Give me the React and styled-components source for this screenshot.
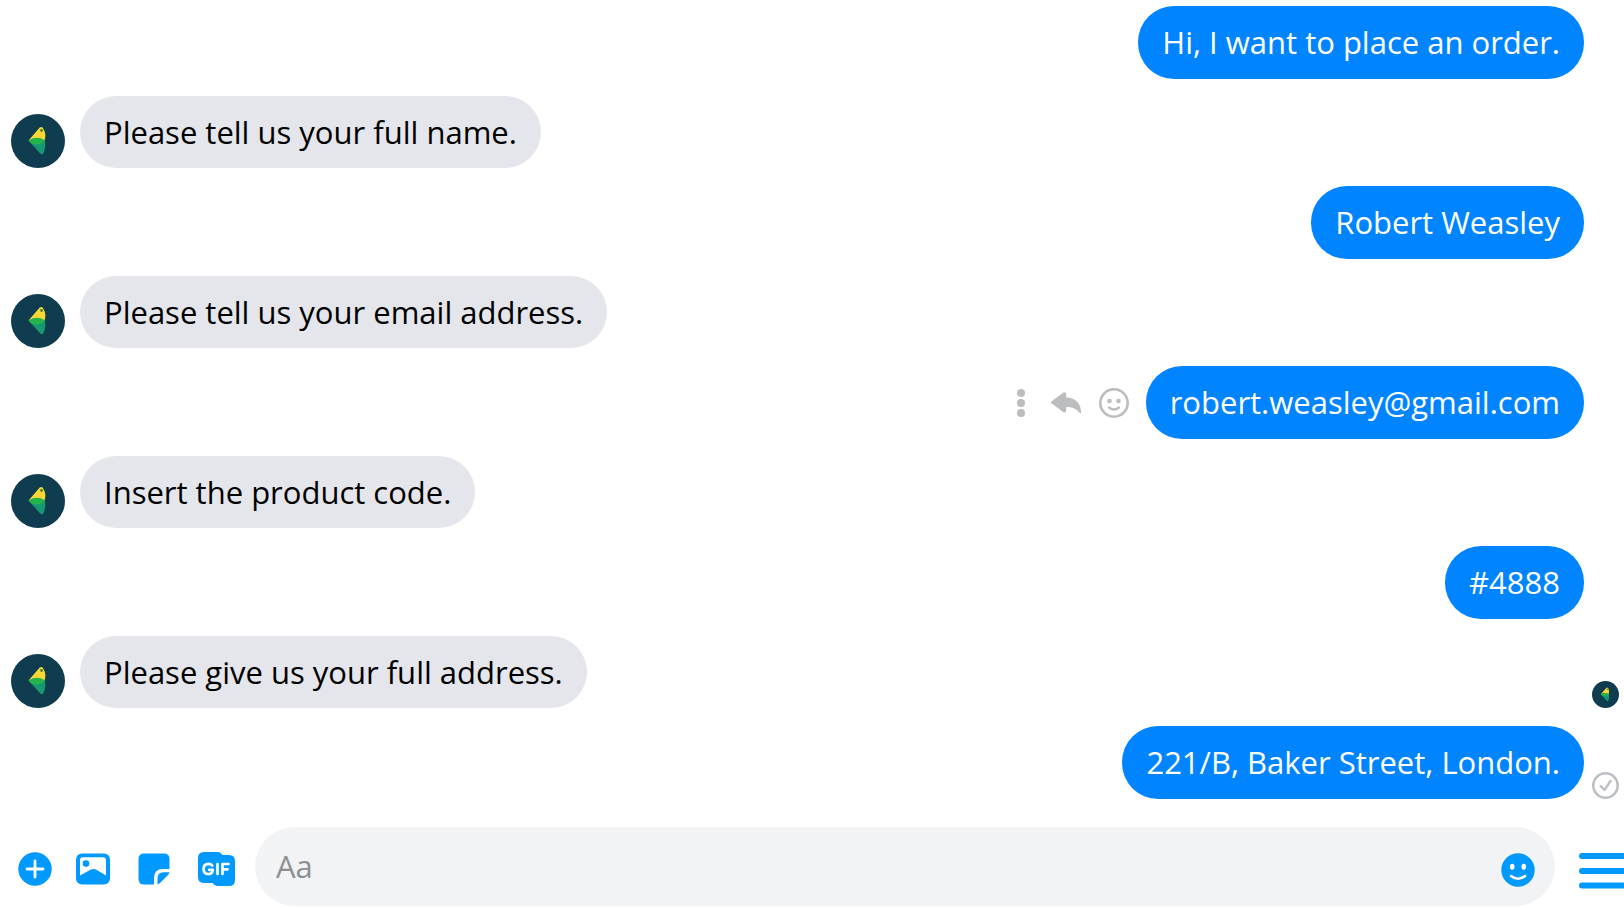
import React, { useState } from 'react'
import styled, { createGlobalStyle } from 'styled-components';

const GlobalStyle = createGlobalStyle`
    * {
        box-sizing: border-box;
    }

    body {
        margin: 0;
        background: #fff;
        font-family: "Segoe UI", "Open Sans", "Noto Sans", sans-serif;
        overflow-x: hidden;
    }

    button {
        display: flex;
        padding: 0;
        border: none;
        background: none;
        cursor: pointer;
    }
`

const ChatWrapper = styled.main`
    padding: 6px 0 2px;
`

const MessageList = styled.div`
    display: flex;
    flex-direction: column;
    gap: 17px;
`

const MessageRow = styled.div`
    display: flex;
    align-items: flex-end;
    justify-content: ${props => props.$sent ? 'flex-end' : 'flex-start'};
    padding: 0 5px ${props => props.$sent ? '0' : '1px'} 11px;
`

const Bubble = styled.p`
    margin: 0 ${props => props.$sent ? '8px' : 'auto'} 0 ${props => props.$sent ? '0' : '15px'};
    padding: 14px 24px ${props => props.$sent ? '14px' : '13px'};
    border-radius: 36px;
    font-size: 31px;
    line-height: 45px;
    color: ${props => props.$sent ? '#fff' : '#000'};
    background: ${props => props.$sent ? '#0084ff' : '#e4e6eb'};
`

const StatusSlot = styled.div`
    display: flex;
    width: 27px;
`

const MessageActions = styled.div`
    display: flex;
    align-items: center;
    align-self: center;
    gap: 18px;
    margin-right: 17px;

    button:first-child {
        margin-right: 8px;
    }
`

const Composer = styled.form`
    display: flex;
    align-items: center;
    margin-top: 28px;
    padding-left: 18px;
`

const ComposerTools = styled.div`
    display: flex;
    align-items: center;
    gap: 24px;
    margin-right: 20px;
    padding-top: 4px;

    button + button + button {
        margin-left: 4px;
    }
`

const InputWrapper = styled.div`
    display: flex;
    flex: 1;
    align-items: center;
    height: 79px;
    padding: 0 20px 0 21px;
    border-radius: 40px;
    background: #f2f3f5;

    input {
        flex: 1;
        min-width: 0;
        padding: 0;
        border: none;
        outline: none;
        background: none;
        font: inherit;
        font-size: 31px;
        line-height: 45px;
    }

    input::placeholder {
        color: #8d8f93;
        opacity: 1;
    }

    button {
        padding-top: 7px;
    }
`

const MenuButton = styled.button`
    && {
        margin-left: 24px;
        padding-top: 8px;
    }
`

const Avatar = ({ size }) => (
  <svg width={size} height={size} viewBox="0 0 54 54" role="img" aria-label="Page avatar">
    <circle cx="27" cy="27" r="27" fill="#103c50" />
    <path d="M17.5 26.5 L28.5 13.8 Q30.500 12 32.2 14.5 Q36 20.5 33.2 28 Z" fill="#fcd734" />
    <path d="M17.5 26.5 Q25 21.500 34 26.5 Q35 34 32.5 39 Q31 41.500 29 39.2 Z" fill="#169873" />
    <path d="M17.5 26.5 Q25 21.500 33.5 26 Q32.500 29.500 29 30 Q24 31 20.500 29.500 Z" fill="#25b34b" />
    <circle cx="30.500" cy="16.500" r="1.400" fill="#35853f" />
  </svg>
)

const DotsIcon = () => (
  <svg width="8" height="28" viewBox="0 0 8 28" fill="#bcbdbf">
    <circle cx="4" cy="4" r="4" />
    <circle cx="4" cy="14" r="4" />
    <circle cx="4" cy="24" r="4" />
  </svg>
)

const ReplyIcon = () => (
  <svg width="30" height="22" viewBox="0 0 30 22" fill="#bcbdbf">
    <path d="M0.700 9.300 L12.500 0.500 Q15 -0.600 15.200 2 V5.200 C24 5.600 30 11 30 20 Q30 22.300 28.200 20.500 C25.500 16.800 21 15 15.200 15 V18.500 Q15 21.300 12.500 20.200 L0.700 11.500 Q-0.500 10.400 0.700 9.300 Z" />
  </svg>
)

const ReactIcon = () => (
  <svg width="30" height="30" viewBox="0 0 30 30">
    <circle cx="15" cy="15" r="13.700" fill="none" stroke="#bcbdbf" strokeWidth="2.600" />
    <circle cx="10.500" cy="13" r="2.300" fill="#bcbdbf" />
    <circle cx="19.500" cy="13" r="2.300" fill="#bcbdbf" />
    <path d="M10 19.500 Q15 23.600 20 19.500" fill="none" stroke="#bcbdbf" strokeWidth="2.400" strokeLinecap="round" />
  </svg>
)

const DeliveredIcon = () => (
  <svg width="27" height="27" viewBox="0 0 27 27" fill="none" stroke="#bcbfc4" role="img" aria-label="Delivered">
    <circle cx="13.500" cy="13.500" r="12.200" strokeWidth="2.600" />
    <path d="M8.700 14.200 L12.500 18 L18.500 9" strokeWidth="2.400" strokeLinecap="round" strokeLinejoin="round" />
  </svg>
)

const PlusIcon = () => (
  <svg width="34" height="34" viewBox="0 0 34 34">
    <circle cx="17" cy="17" r="16.700" fill="#0099ff" />
    <path d="M17 9 V25 M9 17 H25" stroke="#fff" strokeWidth="2.800" strokeLinecap="round" />
  </svg>
)

const PhotoIcon = () => (
  <svg width="34" height="32" viewBox="0 0 34 32">
    <rect width="34" height="31" y="0.500" rx="6" fill="#0099ff" />
    <path d="M7 4.300 H27 Q30 4.300 30 7.300 V22.500 L20 16.500 Q17.500 15.300 15 16.500 L4 22.500 V7.300 Q4 4.300 7 4.300 Z" fill="#fff" />
    <circle cx="10" cy="10.600" r="3.300" fill="#0099ff" />
  </svg>
)

const StickerIcon = () => (
  <svg width="32" height="32" viewBox="0 0 32 32" fill="#0099ff">
    <path d="M6 0.500 H26 Q31.500 0.500 31.500 6 V16 H25 Q16 16 16 25 V31.500 H6 Q0.500 31.500 0.500 26 V6 Q0.500 0.500 6 0.500 Z" />
    <path d="M31.500 19.300 Q31 21 29.500 22.500 L22.500 29.500 Q21 31 19.500 31.500 V25.500 Q19.500 19.300 25.500 19.300 Z" />
  </svg>
)

const GifIcon = () => (
  <svg width="37" height="34" viewBox="0 0 37 34">
    <path d="M6 0 H20 Q22.500 0 24.500 3 H31 Q37 3 37 9 V28 Q37 34 31 34 H19 Q16.500 34 14.500 31 H6 Q0 31 0 25 V6 Q0 0 6 0 Z" fill="#0099ff" />
    <path d="M14.300 13.600 Q12.800 11.900 10.400 11.900 Q5.600 12.300 5.600 17 Q5.600 22 10.400 22.100 Q14.600 22.100 14.800 17.800 H11.200 M19.500 12 V22 M24.500 22 V12 H30.500 M24.500 17.300 H29.500" fill="none" stroke="#fff" strokeWidth="2.700" strokeLinecap="round" strokeLinejoin="round" />
  </svg>
)

const SmileIcon = () => (
  <svg width="34" height="34" viewBox="0 0 34 34">
    <circle cx="17" cy="17" r="16.700" fill="#0099ff" />
    <ellipse cx="11.200" cy="13.800" rx="2.300" ry="3" fill="#fff" />
    <ellipse cx="22.800" cy="13.800" rx="2.300" ry="3" fill="#fff" />
    <path d="M10 23 Q17 28.500 24 23" fill="none" stroke="#fff" strokeWidth="2.500" strokeLinecap="round" />
  </svg>
)

const MenuIcon = () => (
  <svg width="45" height="36" viewBox="0 0 45 36">
    <path d="M3 3 H48 M3 18 H48 M3 32.500 H48" stroke="#0099ff" strokeWidth="6" strokeLinecap="round" />
  </svg>
)

const messages = [
  { id: 1, sent: true, text: 'Hi, I want to place an order.' },
  { id: 2, text: 'Please tell us your full name.' },
  { id: 3, sent: true, text: 'Robert Weasley' },
  { id: 4, text: 'Please tell us your email address.' },
  { id: 5, sent: true, hovered: true, text: 'robert.weasley@gmail.com' },
  { id: 6, text: 'Insert the product code.' },
  { id: 7, sent: true, text: '#4888' },
  { id: 8, seen: true, text: 'Please give us your full address.' },
  { id: 9, sent: true, delivered: true, text: '221/B, Baker Street, London.' },
]

const Message = ({ message }) => (
  <MessageRow $sent={message.sent}>
    {!message.sent && <Avatar size={54} />}
    {message.hovered && (
      <MessageActions>
        <button type="button" aria-label="More"><DotsIcon /></button>
        <button type="button" aria-label="Reply"><ReplyIcon /></button>
        <button type="button" aria-label="React"><ReactIcon /></button>
      </MessageActions>
    )}
    <Bubble $sent={message.sent}>{message.text}</Bubble>
    <StatusSlot>
      {message.seen && <Avatar size={27} />}
      {message.delivered && <DeliveredIcon />}
    </StatusSlot>
  </MessageRow>
)

const App = () => {
  const [draft, setDraft] = useState('')

  const handleSubmit = e => {
      e.preventDefault();
      setDraft('')
  }

  return (
    <ChatWrapper>
        <GlobalStyle />
        <MessageList>
            {messages.map(message => <Message key={message.id} message={message} />)}
        </MessageList>
        <Composer onSubmit={handleSubmit}>
            <ComposerTools>
                <button type="button" aria-label="More options"><PlusIcon /></button>
                <button type="button" aria-label="Add photo"><PhotoIcon /></button>
                <button type="button" aria-label="Add sticker"><StickerIcon /></button>
                <button type="button" aria-label="Add GIF"><GifIcon /></button>
            </ComposerTools>
            <InputWrapper>
                <input
                type="text"
                aria-label="Message"
                placeholder="Aa"
                value={draft}
                onChange={e => setDraft(e.target.value)}
                />
                <button type="button" aria-label="Choose emoji"><SmileIcon /></button>
            </InputWrapper>
            <MenuButton type="button" aria-label="Menu"><MenuIcon /></MenuButton>
        </Composer>
    </ChatWrapper>
  )
}

export default App
